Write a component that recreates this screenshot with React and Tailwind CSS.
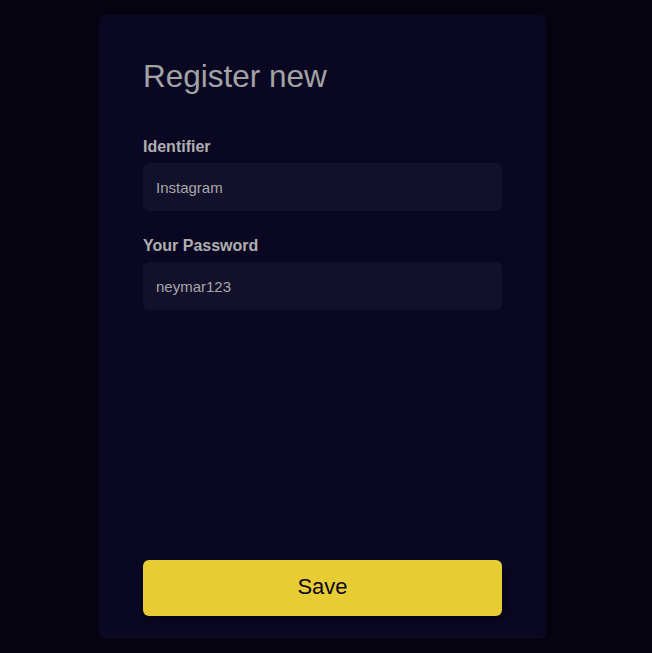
export default function App() {
  return (
    <div
      className="min-h-[653px] w-full bg-[#04030f] flex justify-center pr-[7px] py-[15px]"
      style={{ fontFamily: '"Liberation Sans", Arial, sans-serif' }}
    >
      <div className="w-[447px] h-[624px] bg-[#0a0723] rounded-md flex flex-col px-[44px] pt-[38px] pb-[23px]">
        <h1 className="text-[31.5px] leading-[47px] text-[#a3a3a3]">Register new</h1>

        <div className="mt-[35px] flex flex-col gap-[4px]">
          <label className="text-base leading-6 font-bold text-[#afafaf]">Identifier</label>
          <input
            type="text"
            defaultValue="Instagram"
            className="h-[48px] w-full rounded-md bg-[#13102b] px-[13px] text-[15px] text-[#a8a8a8] outline-none"
          />
        </div>

        <div className="mt-[23px] flex flex-col gap-[4px]">
          <label className="text-base leading-6 font-bold text-[#afafaf]">Your Password</label>
          <input
            type="text"
            defaultValue="neymar123"
            className="h-[48px] w-full rounded-md bg-[#13102b] px-[13px] text-[15px] text-[#a8a8a8] outline-none"
          />
        </div>

        <button className="mt-auto h-[56px] w-full rounded-md bg-[#e8cc33] pb-[4px] text-[22px] text-[#0a0723] shadow-[3px_4px_6px_rgba(0,0,0,0.45)]">
          Save
        </button>
      </div>
    </div>
  );
}
